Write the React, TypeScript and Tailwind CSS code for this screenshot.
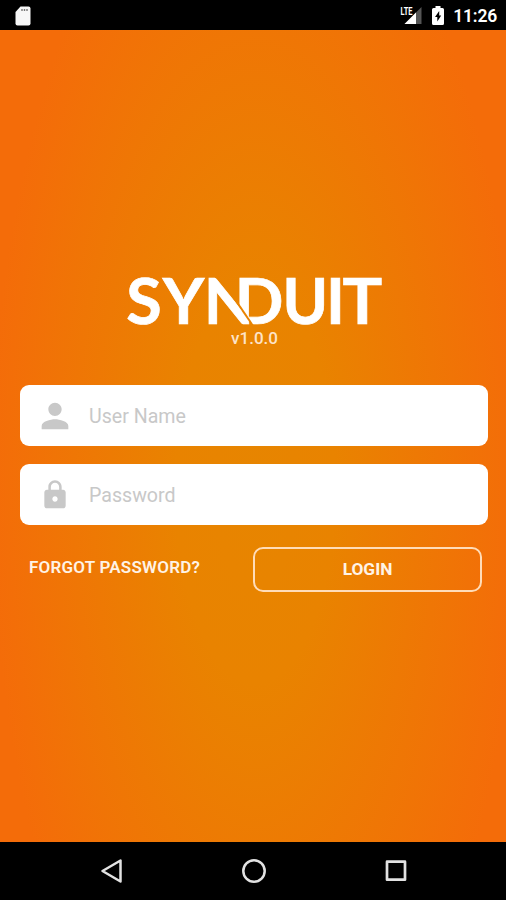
import type { ReactNode } from "react"

const StatusBar = () => {
    return (
        <header className="flex h-[30px] shrink-0 items-center justify-between bg-black pl-[15px] pr-[9px]">
            <svg width="16" height="20" viewBox="0 0 16 20" className="mt-px">
                <path d="M5.5 0.5H13.5Q15.5 0.5 15.5 2.5V17.5Q15.5 19.5 13.5 19.5H2.5Q0.5 19.5 0.5 17.5V6Z" fill="#f7f7f7" />
                <path d="M7 3V5M9.5 3V5M12 3V5" stroke="#777" strokeWidth="1.4" />
            </svg>
            <div className="flex items-center">
                <svg width="22" height="20" viewBox="0 0 22 20" className="mr-[10px]">
                    <path d="M21.5 2V19H4.5Z" fill="#555" />
                    <path d="M16 7.5V19H4.5Z" fill="#fff" />
                    <text x="0.5" y="9.5" fontSize="10.5" fontWeight="700" fill="#fff" textLength="12" lengthAdjust="spacingAndGlyphs">LTE</text>
                </svg>
                <svg width="12" height="19" viewBox="0 0 12 19" className="mr-[9px]">
                    <path d="M3.5 0H8.5V2H10.5Q12 2 12 3.5V17.5Q12 19 10.5 19H1.5Q0 19 0 17.5V3.5Q0 2 1.5 2H3.5Z" fill="#fff" />
                    <path d="M7.2 5L3 11H5.3V15.5L9.2 9.5H7.2Z" fill="#000" />
                </svg>
                <span className="mt-[3px] text-[17.5px] leading-none font-semibold tracking-[-0.2px] text-white">11:26</span>
            </div>
        </header>
    )
}

// The N and the D share one stem: each letter is trimmed along the same diagonal
const Logo = () => {
    return (
        <svg width="258" height="52" viewBox="126 273.5 258 52" fill="#fff" stroke="#fff" strokeWidth="0.7" className="overflow-visible font-['Lato',sans-serif] font-bold" fontSize="64" aria-label="Synduit">
            <defs>
                <clipPath id="cut-n">
                    <path d="M200 270H213.8L250.8 323.8V330H200Z" />
                </clipPath>
                <clipPath id="cut-d">
                    <path d="M236 270H290V330H257.3L236 298.5Z" />
                </clipPath>
            </defs>
            <text transform="translate(126.2 323.2) scale(1.01 1)">S</text>
            <text x="162.7" y="323.2">Y</text>
            <g clipPath="url(#cut-n)">
                <text transform="translate(203.8 323.2) scale(1.02 1)">N</text>
            </g>
            <g clipPath="url(#cut-d)">
                <text x="234.8" y="323.2">D</text>
            </g>
            <text transform="translate(282.5 323.2) scale(0.96 1)">U</text>
            <text x="325.9" y="323.2">I</text>
            <text transform="translate(342.6 323.2) scale(1.035 1)">T</text>
        </svg>
    )
}

interface FieldProps {
    label: string;
    size: number;
    children: ReactNode;
}

const Field = ({ label, size, children }: FieldProps) => {
    return (
        <div className="flex h-[61px] items-center rounded-[9px] bg-white pl-[14px]">
            <div className="flex w-[41px] justify-center">
                <svg width={size} height={size} viewBox="0 0 24 24" fill="#c8c8c8">{children}</svg>
            </div>
            <span className="mt-[2px] ml-[14px] text-[19.6px] leading-none text-[#c8c8c8]">{label}</span>
        </div>
    )
}

const NavBar = () => {
    return (
        <nav className="flex h-[58px] shrink-0 items-center justify-between bg-black pl-[100px] pr-[98px]">
            <svg width="24" height="26" viewBox="0 0 24 26" fill="none" stroke="#e2e2e2" strokeWidth="2.5" strokeLinejoin="round">
                <path d="M20.5 2.5V23.5L2.5 13Z" />
            </svg>
            <svg width="26" height="26" viewBox="0 0 26 26" fill="none" stroke="#e2e2e2" strokeWidth="2.5">
                <circle cx="13" cy="13" r="10.7" />
            </svg>
            <svg width="24" height="24" viewBox="0 0 24 24" fill="none" stroke="#e2e2e2" strokeWidth="2.7" strokeLinejoin="round">
                <rect x="3" y="2.7" width="18" height="18" />
            </svg>
        </nav>
    )
}

export default function App() {
    return (
        <div className="flex h-[900px] w-[506px] flex-col overflow-hidden bg-black font-['Roboto',sans-serif]">
            <StatusBar />
            <main className="flex flex-1 flex-col bg-[radial-gradient(ellipse_265px_660px_at_50.5%_56%,#e78500,#e98300_30%,#f46c09)] px-5 pt-[244px]">
                <div className="flex flex-col items-center pl-[3px]">
                    <Logo />
                    <span className="mt-[4px] text-[17px] leading-none font-medium text-[#fde3c8]">v1.0.0</span>
                </div>
                <form className="mt-[38px] mr-[-2px] flex flex-col gap-[18px]">
                    <Field label="User Name" size={40}>
                        <path d="M12 12c2.21 0 4-1.79 4-4s-1.79-4-4-4-4 1.79-4 4 1.79 4 4 4zm0 2c-2.67 0-8 1.34-8 4v2h16v-2c0-2.66-5.33-4-8-4z" />
                    </Field>
                    <Field label="Password" size={32}>
                        <path d="M18 8h-1V6c0-2.76-2.24-5-5-5S7 3.24 7 6v2H6c-1.1 0-2 .9-2 2v10c0 1.1.9 2 2 2h12c1.1 0 2-.9 2-2V10c0-1.1-.9-2-2-2zm-6 9c-1.1 0-2-.9-2-2s.9-2 2-2 2 .9 2 2-.9 2-2 2zm3.1-9H8.9V6c0-1.71 1.39-3.1 3.1-3.1 1.71 0 3.1 1.39 3.1 3.1v2z" />
                    </Field>
                </form>
                <div className="mt-[22px] flex items-start justify-between pl-[9px] pr-1">
                    <a className="mt-[12px] text-[17px] leading-none font-semibold tracking-[0.22px] text-[#fff3e6]">FORGOT PASSWORD?</a>
                    <button className="h-[45px] w-[229px] rounded-[10px] border-2 border-[#ffdcb8] text-[17.3px] leading-none font-bold text-[#fff3e6]">LOGIN</button>
                </div>
            </main>
            <NavBar />
        </div>
    )
}
